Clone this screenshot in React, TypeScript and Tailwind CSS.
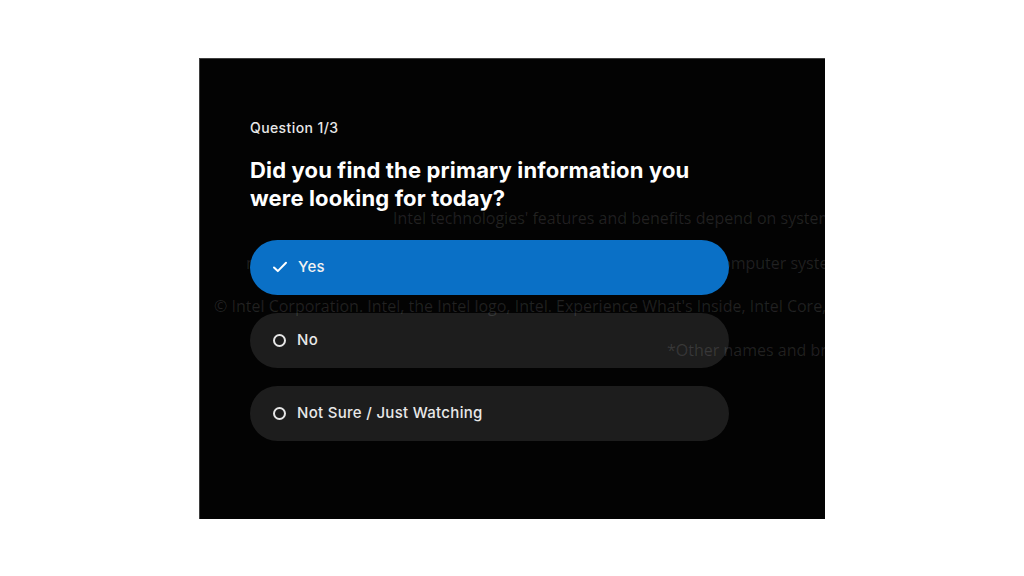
import React from "react";

const CheckIcon = () => (
  <svg width="16" height="16" viewBox="0 0 16 16" fill="none" className="shrink-0">
    <path d="M2 8.5l3.8 3.6L14 3.8" stroke="white" strokeWidth="2" strokeLinecap="round" strokeLinejoin="round" />
  </svg>
);

const RadioIcon = () => (
  <span className="block w-[13px] h-[13px] rounded-full border-2 border-[#e6e6e6] shrink-0" />
);

const options = [
  { label: "Yes", selected: true },
  { label: "No", selected: false },
  { label: "Not Sure / Just Watching", selected: false },
];

export default function App() {
  return (
    <div className="h-screen w-full bg-white flex items-center justify-center">
      <div className="relative w-[626px] h-[461px] bg-[#030303] overflow-hidden border-l border-t border-[#9a9a9a]/40 font-['Inter',sans-serif]">
        {/* footer text bleeding through */}
        <div className="absolute inset-0 z-10 pointer-events-none font-['Open_Sans',sans-serif] text-[16px] leading-5 text-white/[0.12] whitespace-nowrap">
          <div className="absolute left-[193px] top-[149px]">
            Intel technologies' features and benefits depend on system configuration and may require enabled hardware.
          </div>
          <div className="absolute left-[46px] top-[194px] -z-10">
            more from the OEM or retailer. Performance varies by use. No computer system can be absolutely secure.
          </div>
          <div className="absolute left-[14px] top-[237px]">
            © Intel Corporation. Intel, the Intel logo, Intel. Experience What's Inside, Intel Core, and other Intel marks are trademarks.
          </div>
          <div className="absolute left-[467px] top-[281px]">
            *Other names and brands may be claimed as the property of others.
          </div>
        </div>

        <div className="relative pl-[50px] pt-[60px]">
          <p className="text-[14px] leading-[18px] font-medium tracking-[0.4px] text-[#e8e8e8]">Question 1/3</p>
          <h2 className="mt-[19px] text-[22px] leading-[28px] font-bold text-white tracking-[0.15px]">
            Did you find the primary information you
            <br />
            were looking for today?
          </h2>
          <div className="mt-[28px] flex flex-col gap-[18px] w-[479px]">
            {options.map((o) =>
              o.selected ? (
                <button
                  key={o.label}
                  className="relative z-20 h-[55px] rounded-full bg-[#0a70c6] flex items-center gap-[10px] pl-[22px] text-[15px] font-medium tracking-[0.3px] text-[#f2f2f2]"
                >
                  <CheckIcon />
                  {o.label}
                </button>
              ) : (
                <button
                  key={o.label}
                  className="h-[55px] rounded-full bg-[#1d1d1d] flex items-center gap-[11px] pl-[23px] text-[15px] font-medium tracking-[0.3px] text-[#e8e8e8]"
                >
                  <RadioIcon />
                  {o.label}
                </button>
              )
            )}
          </div>
        </div>
      </div>
    </div>
  );
}
